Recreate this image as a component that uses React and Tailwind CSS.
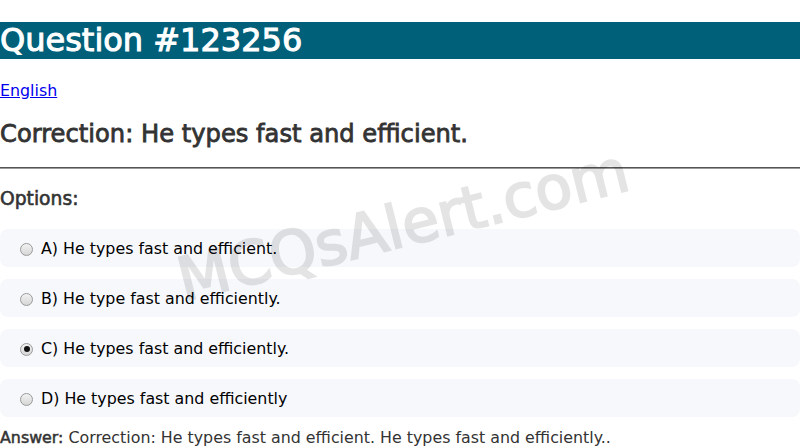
import React from "react";

const font = { fontFamily: '"DejaVu Sans", Verdana, sans-serif' };

function Radio({ checked }) {
  return (
    <span className="flex items-center justify-center w-[13px] h-[13px] rounded-full border border-[#9a9a9a] bg-gradient-to-b from-[#f2f2f2] to-[#d6d6d6] shrink-0">
      {checked && <span className="w-[6px] h-[6px] rounded-full bg-[#111]" />}
    </span>
  );
}

const options = [
  { t: "A) He types fast and efficient.", c: false },
  { t: "B) He type fast and efficiently.", c: false },
  { t: "C) He types fast and efficiently.", c: true },
  { t: "D) He types fast and efficiently", c: false },
];

export default function App() {
  return (
    <div className="relative w-[800px] h-[448px] overflow-hidden bg-white text-[#333]" style={font}>
      <h1 className="mt-[22px] h-[37px] bg-[#00607a] text-white text-[32px] font-normal leading-[37px] whitespace-nowrap [-webkit-text-stroke-width:1px]">
        Question #123256
      </h1>
      <div className="mt-[22px] leading-[20px] text-[15.85px]">
        <a href="#" className="text-[#0000ee] underline">English</a>
      </div>
      <h2 className="mt-[20px] text-[24.2px] font-normal leading-[26px] text-[#333] [-webkit-text-stroke-width:0.8px]">
        Correction: He types fast and efficient.
      </h2>
      <div className="mt-[20px] border-t border-b border-t-[#555] border-b-[#9a9a9a]" />
      <h3 className="mt-[19px] text-[18.72px] font-normal leading-[22px] text-[#333] [-webkit-text-stroke-width:0.6px]">Options:</h3>
      <div className="mt-[19px] flex flex-col gap-[12px]">
        {options.map((o) => (
          <div key={o.t} className="h-[38px] rounded-lg bg-[#f7f8fc] flex items-center pl-[20px] pt-[2px] gap-[8px] text-[15.85px] text-black">
            <Radio checked={o.c} />
            <span>{o.t}</span>
          </div>
        ))}
      </div>
      <div className="mt-[11px] leading-[20px] text-[15.85px] text-[#333] whitespace-nowrap">
        <b className="font-normal [-webkit-text-stroke-width:0.5px]">Answer:</b> Correction: He types fast and efficient. He types fast and efficiently..
      </div>
      <div className="pointer-events-none absolute left-[403px] top-[225px] -translate-x-1/2 -translate-y-1/2 -rotate-[14deg] text-[60px] font-normal text-black opacity-[0.1] whitespace-nowrap [-webkit-text-stroke-width:2px]">
        MCQsAlert.com
      </div>
    </div>
  );
}
